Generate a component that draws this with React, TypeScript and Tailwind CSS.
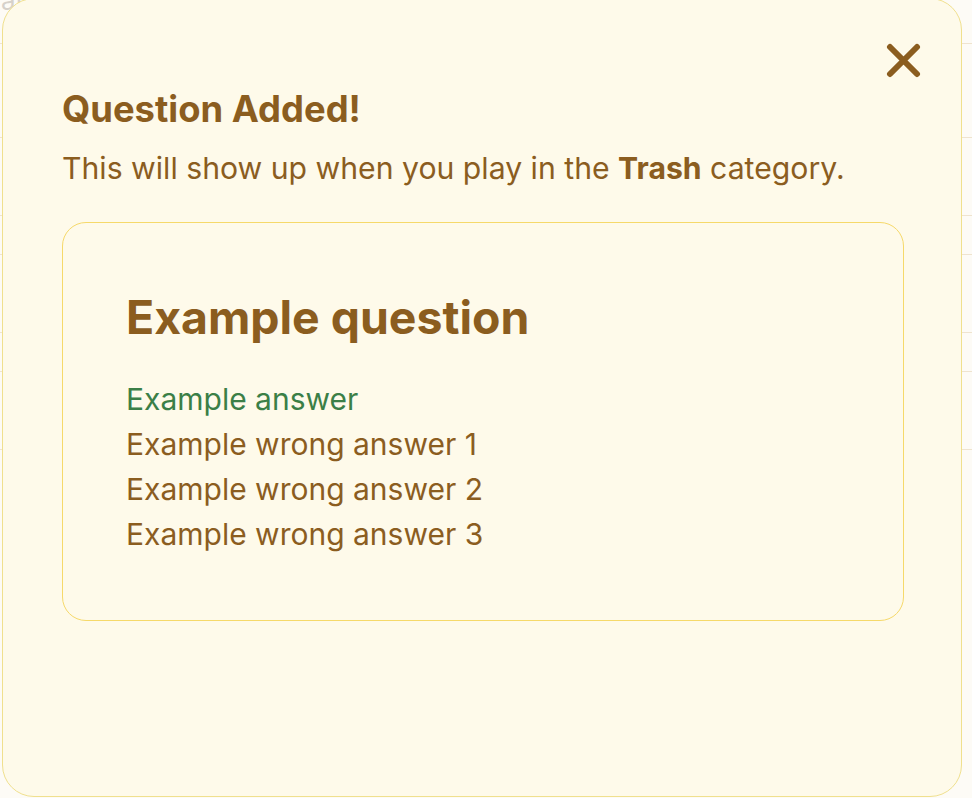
import React from "react";

const BROWN = "text-[#8b5d1f]";

export default function App() {
  const rows = [44, 94, 78, 39, 78, 39, 78];
  return (
    <div
      className="relative w-[972px] h-[798px] overflow-hidden bg-[#fdfbf6]"
      style={{ fontFamily: "Inter, 'Noto Sans', sans-serif" }}
    >
      {/* background page */}
      <div className="flex flex-col w-full">
        {rows.map((h, i) => (
          <div
            key={i}
            className="w-full border-b border-[#efe4cf] overflow-hidden"
            style={{ height: h }}
          >
            {i === 0 && (
              <div className="-mt-[14px] pl-[1px] text-[26px] leading-[30px] text-[#d6d1ca]">
                at
              </div>
            )}
          </div>
        ))}
      </div>

      {/* modal */}
      <div className="absolute left-[2px] top-[-2px] w-[960px] h-[799px] rounded-[32px] border border-[#f0e08e] bg-[#fefaea] pl-[59px] pt-[88px]">
        <button className="absolute left-[883px] top-[44px] w-[36px] h-[36px]" aria-label="Close">
          <svg width="36" height="36" viewBox="0 0 36 36" fill="none">
            <path
              d="M4 4 L31 31 M31 4 L4 31"
              stroke="#8b5d1f"
              strokeWidth="6"
              strokeLinecap="round"
            />
          </svg>
        </button>

        <h2 className={`text-[36.4px] leading-[44px] font-bold ${BROWN}`}>Question Added!</h2>
        <p className={`mt-[17px] text-[30.2px] leading-[40px] ${BROWN}`}>
          This will show up when you play in the <span className="font-bold">Trash</span> category.
        </p>

        <div className="mt-[34px] w-[842px] h-[399px] rounded-[24px] border border-[#f6d96a] pl-[63px] pt-[66px]">
          <h3 className={`text-[46.4px] leading-[56px] font-bold ${BROWN}`}>Example question</h3>
          <ul className="mt-[32px] text-[30px] leading-[45px]">
            <li className="text-[#3b7f47]">Example answer</li>
            <li className={BROWN}>Example wrong answer 1</li>
            <li className={BROWN}>Example wrong answer 2</li>
            <li className={BROWN}>Example wrong answer 3</li>
          </ul>
        </div>
      </div>
    </div>
  );
}
